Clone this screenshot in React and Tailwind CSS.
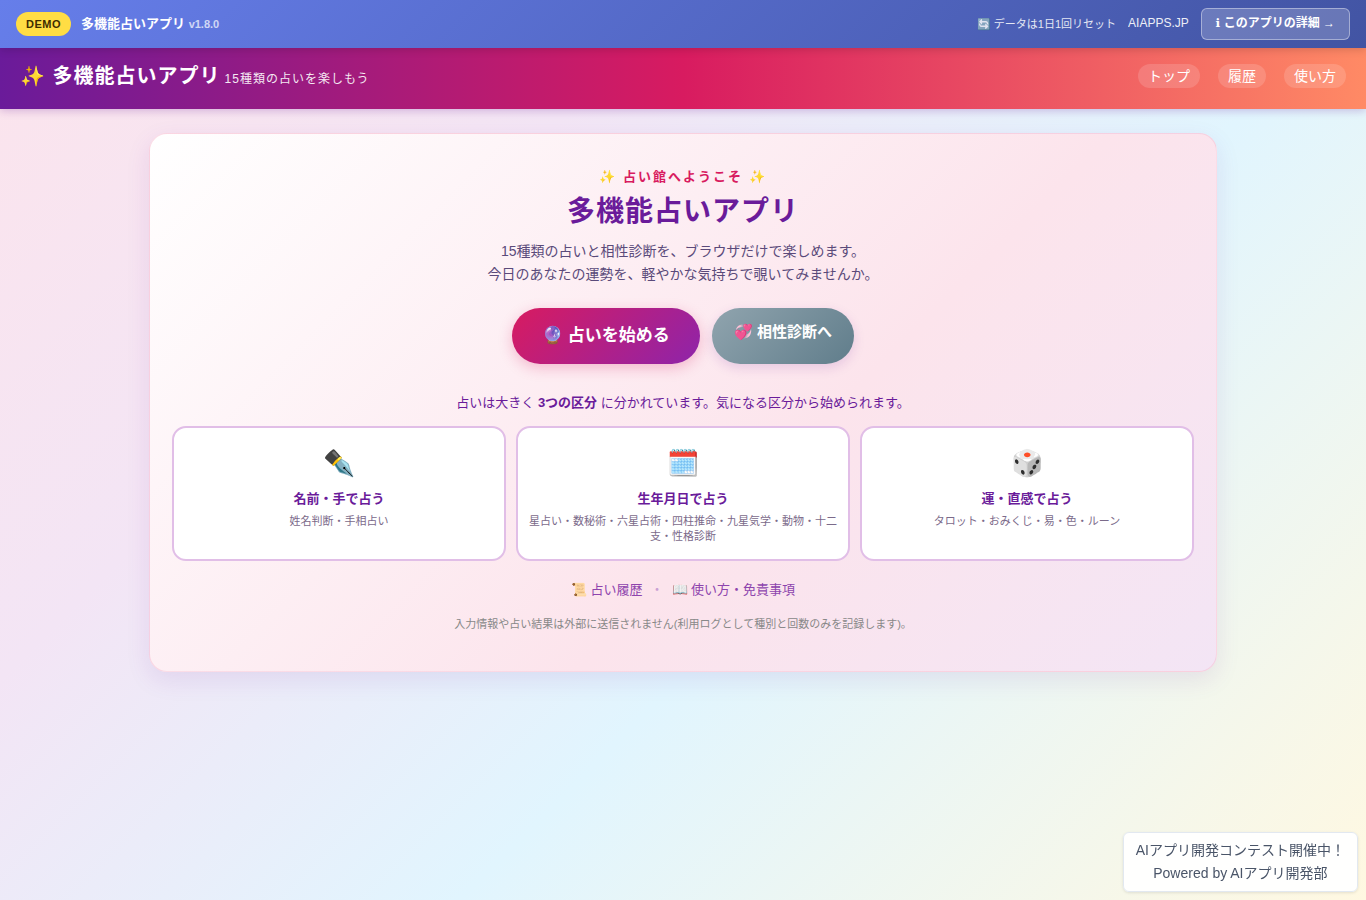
import React from 'react';

const navLinks = [
  { label: 'トップ', href: '#top' },
  { label: '履歴', href: '#history' },
  { label: '使い方', href: '#help' },
];

const categories = [
  { icon: '✒️', title: '名前・手で占う', desc: '姓名判断・手相占い', href: '#name' },
  {
    icon: '🗓️',
    title: '生年月日で占う',
    desc: '星占い・数秘術・六星占術・四柱推命・九星気学・動物・十二支・性格診断',
    href: '#birthday',
  },
  { icon: '🎲', title: '運・直感で占う', desc: 'タロット・おみくじ・易・色・ルーン', href: '#luck' },
];

const DemoBar = () => (
  <div className="relative z-10 flex h-12 items-center justify-between bg-[linear-gradient(135deg,#667eea_0%,#4254a3_100%)] px-4 text-white shadow-[0_2px_8px_rgba(0,0,0,0.15)]">
    <div className="flex items-center gap-2.5">
      <span className="rounded-full bg-[#ffdd44] px-2.5 py-1 text-[11px] leading-4 font-bold tracking-[0.5px] text-[#3d2c00]">
        DEMO
      </span>
      <span className="text-[13px] font-bold">
        多機能占いアプリ <span className="text-[11px] opacity-70">v1.8.0</span>
      </span>
    </div>
    <div className="flex items-center gap-3">
      <span className="text-[11px] opacity-85">🔄 データは1日1回リセット</span>
      <a href="#aiapps" className="pb-0.5 text-xs opacity-90">AIAPPS.JP</a>
      <a
        href="#detail"
        className="rounded-md border border-white/40 bg-white/20 px-3.5 pt-1.5 pb-2 text-xs font-bold"
      >
        <span className="font-['DejaVu_Sans',sans-serif]">ℹ</span> このアプリの詳細 →
      </a>
    </div>
  </div>
);

const Header = () => (
  <header className="relative flex items-center justify-between bg-[linear-gradient(90deg,#6a1b9a,#d81b60_50%,#ff8a65)] px-5 pt-3.5 pb-4 text-white shadow-[0_2px_8px_rgba(106,27,154,0.25)]">
    <div className="leading-[31px] tracking-[1px]">
      <span className="text-xl font-bold">✨ 多機能占いアプリ</span>
      <span className="ml-1 text-xs opacity-90">15種類の占いを楽しもう</span>
    </div>
    <nav className="flex gap-[18px] pb-1">
      {navLinks.map((link) => (
        <a
          key={link.label}
          href={link.href}
          className="rounded-full bg-white/15 px-2.5 py-0.5 text-sm"
        >
          {link.label}
        </a>
      ))}
    </nav>
  </header>
);

const CategoryCard = ({ icon, title, desc, href }) => (
  <a
    href={href}
    className="block rounded-[14px] border-2 border-[#e1bee7] bg-white px-2.5 pt-4 pb-[15px] text-center"
  >
    <div className="text-[26px] leading-[38px]">{icon}</div>
    <div className="mt-[7px] text-[13px] leading-5 font-bold text-[#6a1b9a]">{title}</div>
    <div className="mt-[5px] text-[11px] leading-[15px] text-[#7b6a8a]">{desc}</div>
  </a>
);

const Hero = () => (
  <section className="mx-auto max-w-[1068px] rounded-[18px] border border-[#f8bbd0]/50 bg-[linear-gradient(135deg,#ffffff_0%,#fce4ec_60%,#f3e5f5_100%)] px-[22px] pt-8 pb-[38px] text-center shadow-[0_8px_24px_rgba(106,27,154,0.1)]">
    <p className="text-[13px] leading-[22px] font-bold tracking-[2px] text-[#d81b60]">
      ✨ 占い館へようこそ ✨
    </p>
    <h1 className="mt-1 text-[28px] leading-10 font-bold tracking-[1px] text-[#6a1b9a]">
      多機能占いアプリ
    </h1>
    <p className="mt-2 text-sm leading-[23px] text-[#5a4a7a]">
      15種類の占いと相性診断を、ブラウザだけで楽しめます。
      <br />
      今日のあなたの運勢を、軽やかな気持ちで覗いてみませんか。
    </p>
    <div className="mt-[22px] flex flex-wrap justify-center gap-3">
      <a
        href="#start"
        className="rounded-full bg-[linear-gradient(135deg,#d81b60,#8e24aa)] px-[30px] py-3.5 text-[17px] leading-7 font-bold text-white shadow-[0_4px_14px_rgba(216,27,96,0.25)]"
      >
        🔮 占いを始める
      </a>
      <a
        href="#compat"
        className="rounded-full bg-[linear-gradient(135deg,#90a4ae,#607d8b)] px-[22px] py-3 text-[15px] leading-6 font-bold text-white shadow-[0_4px_12px_rgba(106,27,154,0.15)]"
      >
        💞 相性診断へ
      </a>
    </div>
    <p className="mt-7 text-[13px] leading-[22px] text-[#6a1b9a]">
      占いは大きく <strong>3つの区分</strong> に分かれています。気になる区分から始められます。
    </p>
    <div className="mt-3 grid grid-cols-1 gap-2.5 sm:grid-cols-3">
      {categories.map((category) => (
        <CategoryCard key={category.title} {...category} />
      ))}
    </div>
    <div className="mt-[18px] flex justify-center gap-2 text-[13px] leading-[22px] text-[#8e44ad]">
      <a href="#history">📜 占い履歴</a>
      <span className="text-[#c9a0d4]">・</span>
      <a href="#help">📖 使い方・免責事項</a>
    </div>
    <p className="mt-3.5 text-[11px] leading-[18px] text-[#888]">
      入力情報や占い結果は外部に送信されません(利用ログとして種別と回数のみを記録します)。
    </p>
  </section>
);

const App = () => {
  return (
    <div className="min-h-screen bg-[linear-gradient(135deg,#fce4ec_0%,#f3e5f5_30%,#e1f5fe_60%,#fff8e1_100%)] font-['Liberation_Sans','Noto_Sans_CJK_JP',sans-serif]">
      <DemoBar />
      <Header />
      <main className="px-4 py-6">
        <Hero />
      </main>
      <div className="fixed right-2 bottom-2 rounded-md border border-[#e2e8f0] bg-white/95 px-3 py-1.5 text-center text-sm leading-[23px] text-[#4a5568] shadow-[0_1px_3px_rgba(0,0,0,0.1)]">
        <p>AIアプリ開発コンテスト開催中！</p>
        <p>Powered by AIアプリ開発部</p>
      </div>
    </div>
  );
};

export default App;
